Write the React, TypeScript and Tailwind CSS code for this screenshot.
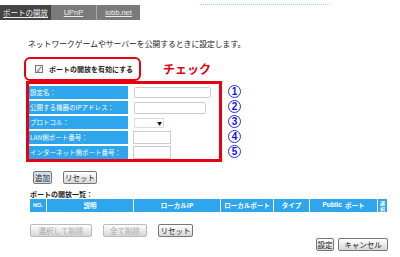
import React from "react";

const labels = [
  "設定名：",
  "公開する機器のIPアドレス：",
  "プロトコル：",
  "LAN側ポート番号：",
  "インターネット側ポート番号：",
];

const nums = ["1", "2", "3", "4", "5"];

const Btn = ({
  children,
  className = "",
  disabled = false,
}: {
  children: React.ReactNode;
  className?: string;
  disabled?: boolean;
}) => (
  <div
    className={`h-[13px] flex items-center justify-center whitespace-nowrap rounded-[2px] border text-[7.5px] leading-none bg-gradient-to-b from-white to-[#d6d6d6] ${
      disabled ? "border-[#bbb] text-[#aaa]" : "border-[#777] text-[#222]"
    } ${className}`}
  >
    {children}
  </div>
);

export default function App() {
  return (
    <div className="w-[400px] h-[257px] bg-white overflow-hidden flex flex-col whitespace-nowrap font-['Noto_Sans_CJK_JP',sans-serif] text-[7.5px] text-[#222]">
      {/* tabs */}
      <div className="flex items-start h-[20px]">
        <div className="mt-[5px] h-[15px] flex text-[7.5px] text-[#eee] underline">
          <div className="w-[51px] bg-[#444] flex items-center justify-center">ポートの開放</div>
          <div className="w-[46px] bg-[#7a7a7a] border-r border-[#aaa] flex items-center justify-center font-['Liberation_Sans',sans-serif]">
            UPnP
          </div>
          <div className="w-[43px] bg-[#7a7a7a] flex items-center justify-center font-['Liberation_Sans',sans-serif]">
            iobb.net
          </div>
        </div>
        <div className="ml-[60px] mt-[4px] w-[130px] border-t border-dotted border-[#9dd]" />
      </div>

      {/* description */}
      <div className="mt-[18px] ml-[28px] h-[11px] leading-[11px] text-[7.8px]">
        ネットワークゲームやサーバーを公開するときに設定します。
      </div>

      {/* enable checkbox */}
      <div className="mt-[8px] flex items-center h-[24px]">
        <div className="ml-[24px] w-[117px] h-[24px] border-2 border-[#e60012] rounded-[6px] flex items-center">
          <div className="ml-[9px] w-[8px] h-[8px] border border-[#777] bg-[#f4f4f4] flex items-center justify-center text-[7px] leading-none text-[#333]">
            ✓
          </div>
          <div className="ml-[6px] font-bold leading-none text-[7px]">ポートの開放を有効にする</div>
        </div>
        <div className="ml-[22px] text-[#e60012] font-bold text-[12px] leading-none">チェック</div>
      </div>

      {/* form box */}
      <div className="flex h-[81px]">
        <div className="ml-[26px] w-[196px] h-[81px] border-[3px] border-[#e60012] pt-[2px] flex flex-col gap-[2px]">
          {labels.map((l, i) => (
            <div key={i} className="flex items-center h-[13px]">
              <div className="w-[99px] h-[13px] bg-[#2ea6ee] text-white flex items-center pl-[1px] leading-none text-[6.5px] overflow-hidden">
                {l}
              </div>
              {i === 0 && <div className="ml-[6px] w-[77px] h-[11px] border border-[#ccc] rounded-[2px]" />}
              {i === 1 && <div className="ml-[6px] w-[72px] h-[12px] border border-[#ccc] rounded-[2px]" />}
              {i === 2 && (
                <div className="ml-[6px] w-[30px] h-[10px] border border-[#ddd] flex items-center justify-end pr-[1px] text-[5px] leading-none text-[#111]">
                  ▼
                </div>
              )}
              {i >= 3 && <div className="ml-[5px] w-[38px] h-[13px] border border-[#ccc]" />}
            </div>
          ))}
        </div>
        <div className="ml-[6px] mt-[4px] flex flex-col gap-[2px]">
          {nums.map((n) => (
            <div
              key={n}
              className="w-[13px] h-[13px] rounded-full border-[1.5px] border-[#2a2af0] flex items-center justify-center text-[10px] leading-none font-bold text-[#1010e8] font-['Liberation_Sans',sans-serif]"
            >
              {n}
            </div>
          ))}
        </div>
      </div>

      {/* add / reset */}
      <div className="mt-[9px] ml-[33px] flex gap-[11px]">
        <Btn className="w-[19px] border-[#3a6ea5] bg-none bg-[#cfe0ee]">追加</Btn>
        <Btn className="w-[34px]">リセット</Btn>
      </div>

      {/* list title */}
      <div className="mt-[5px] ml-[30px] h-[10px] leading-[10px] font-bold text-[7px]">ポートの開放一覧：</div>

      {/* table header */}
      <div className="ml-[30px] w-[357px] h-[13px] flex bg-[#2ea6ee] text-white font-bold leading-none text-[6.5px]">
        <div className="w-[17px] flex items-center justify-center border-r border-white text-[5.5px] font-['Liberation_Sans',sans-serif]">
          NO.
        </div>
        <div className="w-[87px] flex items-center justify-center border-r border-white">説明</div>
        <div className="w-[87px] flex items-center justify-center border-r border-white">ローカルIP</div>
        <div className="w-[53px] flex items-center justify-center border-r border-white">ローカルポート</div>
        <div className="w-[36px] flex items-center justify-center border-r border-white">タイプ</div>
        <div className="w-[68px] flex items-center justify-center border-r border-white">
          <span className="font-['Liberation_Sans',sans-serif] mr-[3px]">Public</span>ポート
        </div>
        <div className="w-[9px] flex flex-col items-center justify-center text-[5px] leading-[6px]">
          <span>選</span>
          <span>択</span>
        </div>
      </div>

      {/* delete buttons */}
      <div className="mt-[12px] ml-[30px] flex">
        <Btn disabled className="w-[62px]">選択して削除</Btn>
        <Btn disabled className="ml-[11px] w-[44px]">全て削除</Btn>
        <Btn className="ml-[11px] w-[35px]">リセット</Btn>
      </div>

      {/* save / cancel */}
      <div className="mt-[1px] mr-[12px] flex justify-end gap-[4px]">
        <Btn className="w-[18px]">設定</Btn>
        <Btn className="w-[50px]">キャンセル</Btn>
      </div>
    </div>
  );
}
